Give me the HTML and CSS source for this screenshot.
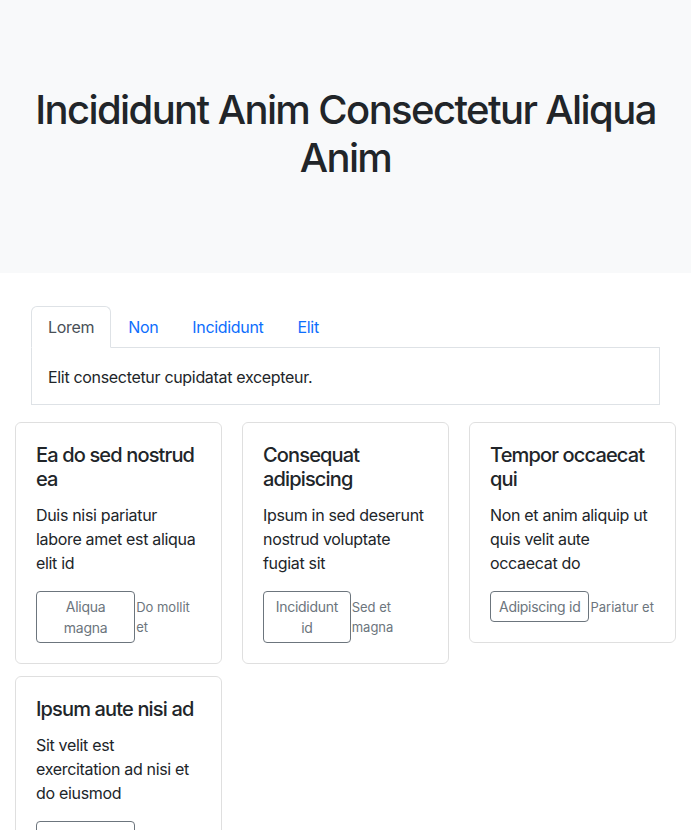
FILE: index.html
```html
<!DOCTYPE html>
<html lang="en">
<head>
<meta charset="utf-8">
<title>Incididunt Anim</title>
<link rel="stylesheet" href="styles.css">
</head>
<body>
<header class="hero">
  <h1 class="hero-title">Incididunt Anim Consectetur Aliqua Anim</h1>
</header>
<section class="tabs-wrap">
  <ul class="nav-tabs">
    <li><a class="tab active" href="#">Lorem</a></li>
    <li><a class="tab" href="#">Non</a></li>
    <li><a class="tab" href="#">Incididunt</a></li>
    <li><a class="tab" href="#">Elit</a></li>
  </ul>
  <div class="tab-content">Elit consectetur cupidatat excepteur.</div>
</section>
<section class="cards">
  <div class="card">
    <h5 class="card-title">Ea do sed nostrud ea</h5>
    <p class="card-text">Duis nisi pariatur labore amet est aliqua elit id</p>
    <div class="card-actions"><button class="btn">Aliqua magna</button><small class="note">Do mollit et</small></div>
  </div>
  <div class="card">
    <h5 class="card-title">Consequat adipiscing</h5>
    <p class="card-text">Ipsum in sed deserunt nostrud voluptate fugiat sit</p>
    <div class="card-actions"><button class="btn">Incididunt id</button><small class="note">Sed et magna</small></div>
  </div>
  <div class="card">
    <h5 class="card-title">Tempor occaecat qui</h5>
    <p class="card-text">Non et anim aliquip ut quis velit aute occaecat do</p>
    <div class="card-actions"><button class="btn">Adipiscing id</button><small class="note">Pariatur et</small></div>
  </div>
  <div class="card">
    <h5 class="card-title">Ipsum aute nisi ad</h5>
    <p class="card-text">Sit velit est exercitation ad nisi et do eiusmod</p>
    <div class="card-actions"><button class="btn">Laboris anim</button><small class="note">Anim ut</small></div>
  </div>
</section>
</body>
</html>
```
FILE: styles.css
```css
* { box-sizing: border-box; }
body {
  margin: 0;
  font-family: Inter, "Liberation Sans", sans-serif;
  font-size: 16px;
  line-height: 1.5;
  letter-spacing: -0.02em;
  color: #212529;
  background: #fff;
}
.hero {
  background: #f8f9fa;
  height: 273px;
  padding: 86px 12px 0;
  text-align: center;
}
.hero-title {
  margin: 0;
  font-size: 40px;
  font-weight: 500;
  line-height: 48px;
  letter-spacing: -1.6px;
}
.tabs-wrap {
  margin: 33px 31px 0;
}
.nav-tabs {
  list-style: none;
  margin: 0;
  padding: 0;
  display: flex;
  border-bottom: 1px solid #dee2e6;
}
.tab {
  display: block;
  padding: 8px 16px;
  margin-bottom: -1px;
  color: #0d6efd;
  text-decoration: none;
  border: 1px solid transparent;
  border-top-left-radius: 6px;
  border-top-right-radius: 6px;
}
.tab.active {
  color: #495057;
  background: #fff;
  border-color: #dee2e6 #dee2e6 #fff;
}
.tab-content {
  border: 1px solid #dee2e6;
  border-top: 0;
  padding: 17px 16px 15px;
}
.cards {
  display: grid;
  grid-template-columns: repeat(3, 207px);
  column-gap: 20px;
  row-gap: 12px;
  align-items: start;
  padding-left: 15px;
  margin-top: 17px;
}
.card {
  border: 1px solid rgba(0,0,0,.125);
  border-radius: 6px;
  padding: 20px;
}
.card-title {
  margin: 0 0 12px;
  font-size: 20px;
  font-weight: 500;
  line-height: 24px;
  letter-spacing: -0.85px;
}
.card-text {
  margin: 0 0 16px;
}
.card-actions {
  display: flex;
  align-items: baseline;
}
.btn {
  flex: 0 1 auto;
  font-family: inherit;
  font-size: 14px;
  line-height: 21px;
  letter-spacing: -0.02em;
  padding: 4px 8px;
  color: #6c757d;
  background: transparent;
  border: 1px solid #6c757d;
  border-radius: 4px;
  text-align: center;
}
.note {
  flex: 0 1 auto;
  font-size: 13px;
  line-height: 20px;
  letter-spacing: 0;
  color: #6c757d;
  padding-left: 1px;
}
```
